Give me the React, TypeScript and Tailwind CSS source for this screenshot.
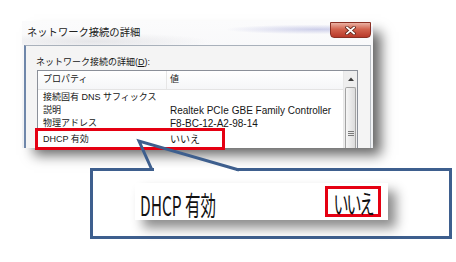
import React from "react";

function CloseBtn() {
  return (
    <div className="mt-[1px] mr-[2px] flex h-[16px] w-[41px] items-center justify-center rounded-b-[4px] border border-[#8a3024] bg-[linear-gradient(to_bottom,#eab1a3,#d2634e_45%,#b8392a)]">
      <svg width="11" height="9" viewBox="0 0 11 9">
        <path d="M2 1.5 L9 7.5 M9 1.5 L2 7.5" stroke="#5c2218" strokeWidth="3.4" strokeLinecap="square" />
        <path d="M2 1.5 L9 7.5 M9 1.5 L2 7.5" stroke="#ffffff" strokeWidth="1.8" strokeLinecap="square" />
      </svg>
    </div>
  );
}

function Row({ k, v, className = "" }: { k: string; v?: string; className?: string }) {
  return (
    <div className={"flex h-[13px] items-center " + className}>
      <div className="w-[129px] shrink-0 whitespace-nowrap pl-[5px] text-[9px] leading-[13px]">{k}</div>
      <div className="whitespace-nowrap pl-[3px] text-[10px] leading-[13px]">{v}</div>
    </div>
  );
}

export default function App() {
  return (
    <div className="relative h-[262px] w-[456px] overflow-hidden bg-white font-['Liberation_Sans','Noto_Sans_CJK_JP',sans-serif] text-[#161616]">
      <div className="pl-[22px] pt-[21px]">
        <div className="flex h-[127px] w-[351px] flex-col bg-[linear-gradient(to_bottom,#fbfbfc,#eef0f3)] shadow-[10px_9px_12px_-2px_rgba(0,0,0,0.6)]">
          <div className="flex h-[24px] items-start justify-between bg-[radial-gradient(ellipse_at_84%_35%,rgba(120,125,200,0.35),transparent_22%),radial-gradient(ellipse_at_20%_85%,rgba(140,140,150,0.18),transparent_30%)]">
            <div className="flex h-full items-center pl-[5px] text-[10.3px] text-[#222]">
              ネットワーク接続の詳細
            </div>
            <CloseBtn />
          </div>
          <div className="mx-[2px] flex min-h-0 flex-1 flex-col border-t border-r border-l-2 border-[#a9b1bb] border-l-[#6f87aa] border-r-[#b9bec4] bg-[#f4f4f4]">
            <div className="ml-[10px] mt-[10px] h-[12px] text-[9px] leading-[12px]">
              ネットワーク接続の詳細(<span className="underline">D</span>):
            </div>
            <div className="ml-[11px] mt-[2px] flex min-h-0 w-[321px] flex-1 overflow-hidden border border-b-0 border-[#8b9099] bg-white">
              <div className="flex min-w-0 flex-1 flex-col">
                <div className="flex h-[19px] items-center border-b border-[#e4e4e4] bg-[linear-gradient(to_bottom,#ffffff,#f5f6f8)]">
                  <div className="flex h-full w-[129px] shrink-0 items-center border-r border-[#e6e6e6] pl-[5px] text-[9px]">
                    プロパティ
                  </div>
                  <div className="pl-[3px] text-[9px]">値</div>
                </div>
                <div className="pt-[1px]">
                  <Row k="接続固有 DNS サフィックス" />
                  <Row k="説明" v="Realtek PCIe GBE Family Controller" />
                  <Row k="物理アドレス" v="F8-BC-12-A2-98-14" />
                  <Row k="DHCP 有効" v="いいえ" className="mt-[3px]" />
                </div>
              </div>
              <div className="flex w-[14px] shrink-0 flex-col border-l border-[#e8e8e8] bg-[#eeeeee]">
                <div className="flex h-[16px] items-center justify-center">
                  <svg width="6" height="4" viewBox="0 0 6 4">
                    <polygon points="0,4 3,0.5 6,4" fill="#3c3c3c" />
                  </svg>
                </div>
                <div className="mx-[1px] flex flex-1 flex-col items-center rounded-t-[2px] border border-b-0 border-[#a3a3a3] bg-[linear-gradient(to_right,#f6f6f6,#dcdcdc)] pt-[43px]">
                  <div className="flex flex-col gap-[1px]">
                    <div className="h-[1px] w-[6px] bg-[#7a7a7a]" />
                    <div className="h-[1px] w-[6px] bg-[#7a7a7a]" />
                    <div className="h-[1px] w-[6px] bg-[#7a7a7a]" />
                  </div>
                </div>
              </div>
            </div>
          </div>
        </div>
      </div>

      <div className="ml-[90px] mt-[20px] h-[71px] w-[362px] border-[3px] border-[#3e5f8e] bg-white pl-[42px] pt-[12px]">
        <div className="flex h-[37px] w-[253px] items-center justify-between bg-white pl-[5px] pr-[7px] shadow-[8px_8px_12px_rgba(0,0,0,0.45)]">
          <span className="inline-block translate-y-[3px] scale-y-[1.75] whitespace-nowrap font-['Noto_Sans_CJK_JP',sans-serif] text-[15.5px] leading-none text-[#111]">
            DHCP 有効
          </span>
          <div className="flex h-[31px] w-[56px] items-center justify-center border-[3px] border-[#e50012]">
            <span className="inline-block translate-y-[1px] scale-y-[1.75] whitespace-nowrap font-['Noto_Sans_CJK_JP',sans-serif] text-[15px] leading-none tracking-[-2px] text-[#111]">
              いいえ
            </span>
          </div>
        </div>
      </div>

      <div className="absolute left-[35px] top-[128px] h-[22px] w-[190px] border-[3px] border-[#e50012]" />

      <svg className="pointer-events-none absolute left-0 top-0" width="456" height="262" viewBox="0 0 456 262">
        <line x1="154" y1="169.5" x2="236" y2="169.5" stroke="#ffffff" strokeWidth="3.4" />
        <polyline points="152,170 139,141 239,170" fill="none" stroke="#3e5f8e" strokeWidth="3" strokeLinejoin="miter" />
      </svg>
    </div>
  );
}
